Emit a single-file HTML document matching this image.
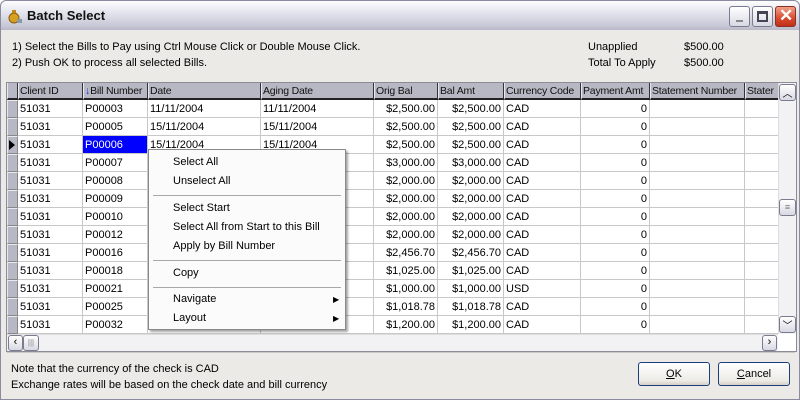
<!DOCTYPE html>
<html><head><style>
*{margin:0;padding:0;box-sizing:border-box}
body{width:800px;height:400px;overflow:hidden;font-family:"Liberation Sans",sans-serif;font-size:11px;color:#000;background:#fff}
#win{position:absolute;left:0;top:0;width:800px;height:400px;background:#eceae6;border:1px solid #8a8aa0;border-radius:6px 6px 0 0}
#title{position:absolute;left:0;top:0;width:798px;height:29px;background:linear-gradient(#fdfdfe,#e4e4ee 40%,#c8c8d6 85%,#b8b8c8);border-radius:6px 6px 0 0}
#title .t{position:absolute;left:26px;top:7px;font-weight:bold;font-size:13px;color:#111}
.tb{position:absolute;top:5px;width:21px;height:21px;border:1px solid #7b7b90;border-radius:3px;background:linear-gradient(#fff,#d8d8e4)}
.abs{position:absolute;white-space:nowrap}
#grid{position:absolute;left:5px;top:81px;width:791px;height:270px;background:#fff;border:1px solid #8c8c98;overflow:hidden}
.hd{position:absolute;top:0;height:17px;background:#b8b8c4;border-right:1px solid #333;border-left:1px solid #e8e8f0;padding:2px 1px;font-size:10.5px;color:#111;border-bottom:2px solid #222;white-space:nowrap;overflow:hidden;letter-spacing:-0.2px}
.cell{position:absolute;height:18px;border-right:1px solid #c8c8c8;border-bottom:1px solid #c8c8c8;padding:3px 2px;overflow:hidden;white-space:nowrap}
.r{text-align:right}
.ind{position:absolute;left:0;width:11px;height:18px;background:#b8b8c4;border:1px solid #e8e8f0;border-right-color:#888;border-bottom-color:#888}
#menu{position:absolute;left:147px;top:148px;width:198px;height:181px;background:#fbfbfb;border:1px solid #8a8a8a;box-shadow:2px 2px 2px rgba(0,0,0,.35)}
#menu .i{position:absolute;left:24px;font-size:11px;white-space:nowrap}
#menu .s{position:absolute;left:4px;right:4px;height:1px;background:#a8a8a8}
.btn{position:absolute;top:361px;width:72px;height:24px;border:1px solid #1c3e7c;border-radius:3px;background:linear-gradient(#fff,#ecebe6 80%,#d6d0c4);text-align:center;padding-top:5px;font-size:11px}
</style></head><body>
<div id="win">
<div id="title">
<svg class="abs" style="left:6px;top:7px" width="16" height="16"><circle cx="7" cy="10" r="5" fill="#d8a020" stroke="#8a5a10"/><rect x="5" y="2" width="4" height="3" fill="#c08818"/><rect x="10" y="11" width="5" height="4" fill="#8899aa"/></svg>
<div class="t">Batch Select</div>
<div class="tb" style="left:728px"><div class="abs" style="left:6px;top:13px;width:7px;height:2px;background:#888"></div></div>
<div class="tb" style="left:751px"><div class="abs" style="left:4px;top:4px;width:11px;height:11px;border:2px solid #445;border-top-width:3px"></div></div>
<div class="tb" style="left:774px;border-color:#8a3020;background:linear-gradient(#f0a088,#d84a30 60%,#c03018)"><div class="abs" style="left:3px;top:-1px;color:#fff;font-size:17px;font-weight:bold">✕</div></div>
</div>
<div class="abs" style="left:11px;top:40px">1) Select the Bills to Pay using Ctrl Mouse Click or Double Mouse Click.</div>
<div class="abs" style="left:11px;top:56px">2) Push OK to process all selected Bills.</div>
<div class="abs" style="left:587px;top:40px">Unapplied</div>
<div class="abs" style="left:587px;top:56px">Total To Apply</div>
<div class="abs" style="left:683px;top:40px">$500.00</div>
<div class="abs" style="left:683px;top:56px">$500.00</div>

<div id="grid">
<div class="hd" style="left:0;width:11px"></div>
<div class="hd" style="left:11px;width:65px">Client ID</div>
<div class="hd" style="left:76px;width:65px"><span style="color:#1530d0">↓</span>Bill Number</div>
<div class="hd" style="left:141px;width:113px">Date</div>
<div class="hd" style="left:254px;width:113px">Aging Date</div>
<div class="hd" style="left:367px;width:64px">Orig Bal</div>
<div class="hd" style="left:431px;width:66px">Bal Amt</div>
<div class="hd" style="left:497px;width:77px">Currency Code</div>
<div class="hd" style="left:574px;width:69px">Payment Amt</div>
<div class="hd" style="left:643px;width:95px">Statement Number</div>
<div class="hd" style="left:738px;width:40px">Stater</div>
<div id="rows"></div>
<div class="abs" style="left:771px;top:0;width:18px;height:251px;background:#f2f2f4;border-left:1px solid #ddd"></div>
<div class="tb" style="left:772px;top:1px;width:17px;height:17px;font-size:10px;text-align:center">︿</div>
<div class="tb" style="left:772px;top:116px;width:17px;height:17px;font-size:9px;text-align:center;line-height:14px;color:#777">≡</div>
<div class="tb" style="left:772px;top:233px;width:17px;height:17px;font-size:10px;text-align:center">﹀</div>
<div class="abs" style="left:0;top:251px;width:771px;height:17px;background:#f2f2f4;border-top:1px solid #ddd"></div>
<div class="tb" style="left:1px;top:252px;width:15px;height:16px;font-size:11px;text-align:center;line-height:13px">‹</div>
<div class="tb" style="left:16px;top:252px;width:16px;height:16px;font-size:8px;text-align:center;line-height:13px;color:#888">|||</div>
<div class="tb" style="left:755px;top:252px;width:15px;height:16px;font-size:11px;text-align:center;line-height:13px">›</div>
</div>

<div class="abs" style="left:6px;top:351px;width:788px;height:1px;background:#c8c8c8"></div>
<div class="abs" style="left:10px;top:362px">Note that the currency of the check is CAD</div>
<div class="abs" style="left:10px;top:378px">Exchange rates will be based on the check date and bill currency</div>
<div class="btn" style="left:637px"><u>O</u>K</div>
<div class="btn" style="left:717px"><u>C</u>ancel</div>

<div id="menu">
<div class="i" style="top:6px">Select All</div>
<div class="i" style="top:25px">Unselect All</div>
<div class="s" style="top:45px"></div>
<div class="i" style="top:52px">Select Start</div>
<div class="i" style="top:71px">Select All from Start to this Bill</div>
<div class="i" style="top:90px">Apply by Bill Number</div>
<div class="s" style="top:110px"></div>
<div class="i" style="top:117px">Copy</div>
<div class="s" style="top:137px"></div>
<div class="i" style="top:143px">Navigate</div>
<div class="i" style="top:162px">Layout</div>
<div class="abs" style="left:184px;top:145px;font-size:8px">▶</div>
<div class="abs" style="left:184px;top:164px;font-size:8px">▶</div>
</div>
</div>
<script>
var d=[["P00003","11/11/2004","11/11/2004","$2,500.00","$2,500.00","CAD"],["P00005","15/11/2004","15/11/2004","$2,500.00","$2,500.00","CAD"],["P00006","15/11/2004","15/11/2004","$2,500.00","$2,500.00","CAD"],["P00007","","","$3,000.00","$3,000.00","CAD"],["P00008","","","$2,000.00","$2,000.00","CAD"],["P00009","","","$2,000.00","$2,000.00","CAD"],["P00010","","","$2,000.00","$2,000.00","CAD"],["P00012","","","$2,000.00","$2,000.00","CAD"],["P00016","","","$2,456.70","$2,456.70","CAD"],["P00018","","","$1,025.00","$1,025.00","CAD"],["P00021","","","$1,000.00","$1,000.00","USD"],["P00025","","","$1,018.78","$1,018.78","CAD"],["P00032","","","$1,200.00","$1,200.00","CAD"]];
var cols=[[11,65],[76,65],[141,113],[254,113],[367,64],[431,66],[497,77],[574,69],[643,95],[738,40]];
var h="";
d.forEach(function(r,i){var y=17+i*18;
h+='<div class="ind" style="top:'+y+'px">'+(i==2?'<div style="position:absolute;left:1px;top:3px;width:0;height:0;border-left:6px solid #000;border-top:5px solid transparent;border-bottom:5px solid transparent"></div>':'')+'</div>';
var v=["51031",r[0],r[1],r[2],r[3],r[4],r[5],"0","",""];
v.forEach(function(t,j){var c=cols[j];var st='left:'+c[0]+'px;top:'+y+'px;width:'+c[1]+'px;';
if(i==2&&j==1)st+='background:#0000ff;color:#fff;';
h+='<div class="cell'+((j>=4&&j<=5)||j==7?' r':'')+'" style="'+st+'">'+t+'</div>';});});
document.getElementById('rows').innerHTML=h;
</script>
</body></html>
